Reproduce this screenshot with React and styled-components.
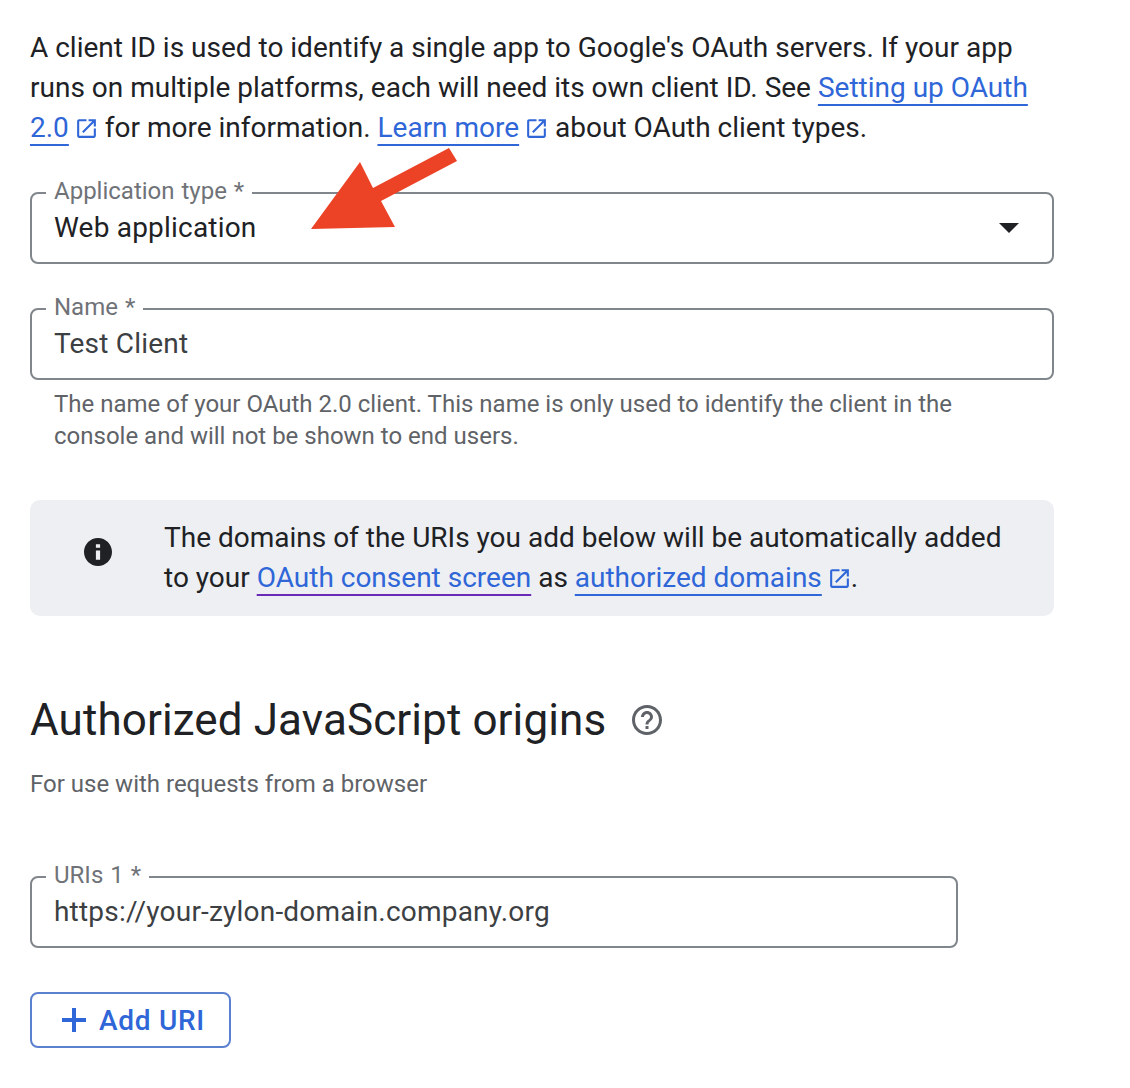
import React from 'react'
import styled, { createGlobalStyle } from 'styled-components'

const Global = createGlobalStyle`
    html, body {
        margin: 0;
        padding: 0;
        background: #ffffff;
    }
    body {
        font-family: Roboto, "Liberation Sans", sans-serif;
        color: #202124;
    }
`

const Page = styled.div`
    position: relative;
    width: 1130px;
    height: 1088px;
    overflow: hidden;
    box-sizing: border-box;
    padding: 28px 0 0 30px;
`

const Intro = styled.p`
    margin: 0 0 29px;
    width: 1024px;
    font-size: 28px;
    line-height: 40px;
    white-space: nowrap;
`

const TextLink = styled.a`
    color: #2f66d8;
    text-decoration: underline;
    text-decoration-color: ${p => p.$visited ? '#6a2ab8' : '#2f66d8'};
    text-decoration-thickness: 2px;
    text-underline-offset: 7px;
    text-decoration-skip-ink: none;
`

const LinkIcon = styled.svg`
    width: 25px;
    height: 25px;
    margin: 0 -1px 0 5px;
    vertical-align: -4px;
    fill: #2f66d8;
`

const Field = styled.fieldset`
    box-sizing: border-box;
    width: ${p => p.$width || 1024}px;
    height: 87px;
    margin: 0;
    padding: 0 22px;
    border: 2px solid #80868b;
    border-radius: 8px;
    display: flex;
    align-items: center;
    justify-content: space-between;
`

const Legend = styled.legend`
    margin-left: -8px;
    padding: 0 8px 4px;
    font-size: 24px;
    line-height: 28px;
    word-spacing: 1px;
    color: #6f7378;
`

const Value = styled.span`
    font-size: 28px;
    line-height: 40px;
    letter-spacing: 0.2px;
    color: ${p => p.$muted ? '#3c4043' : '#202124'};
    margin-top: -15px;
`

const Caret = styled.span`
    width: 0;
    height: 0;
    margin: -15px 11px 0 0;
    border-left: 10px solid transparent;
    border-right: 10px solid transparent;
    border-top: 10px solid #202124;
`

const Stack = styled.div`
    margin-bottom: ${p => p.$gap || 0}px;
`

const Helper = styled.p`
    margin: 8px 0 0;
    padding-left: 24px;
    font-size: 24px;
    line-height: 32px;
    color: #5f6368;
    white-space: nowrap;
`

const Notice = styled.div`
    box-sizing: border-box;
    width: 1024px;
    height: 116px;
    margin-bottom: 76px;
    padding: 18px 0 0 54px;
    display: flex;
    gap: 52px;
    background: #edeff3;
    border-radius: 10px;
`

const NoticeIcon = styled.svg`
    flex: none;
    width: 28px;
    height: 28px;
    margin: 20px 0 0;
    fill: #202124;
    transform: scale(1.2);
`

const NoticeText = styled.div`
    font-size: 28px;
    line-height: 40px;
    white-space: nowrap;
`

const TitleRow = styled.div`
    display: flex;
    align-items: center;
    gap: 23px;
    height: 56px;
    margin-bottom: 20px;
`

const Title = styled.h2`
    margin: 0;
    font-size: 44px;
    font-weight: 400;
    line-height: 56px;
    letter-spacing: 0.1px;
    color: #202124;
`

const HelpIcon = styled.svg`
    width: 36px;
    height: 36px;
    fill: #5f6368;
`

const Subtitle = styled.p`
    margin: 0 0 61px;
    font-size: 24px;
    line-height: 32px;
    color: #5f6368;
`

const AddButton = styled.button`
    box-sizing: border-box;
    width: 201px;
    height: 56px;
    margin-top: 44px;
    padding: 0 0 0 30px;
    display: flex;
    align-items: center;
    gap: 13px;
    background: #ffffff;
    border: 2px solid #5b80cf;
    border-radius: 8px;
    font-family: Roboto, "Liberation Sans", sans-serif;
    font-size: 28px;
    font-weight: 500;
    letter-spacing: 0.7px;
    color: #2f66d8;
`

const PlusIcon = styled.svg`
    width: 24px;
    height: 24px;
    fill: #2f66d8;
`

const Arrow = styled.svg`
    position: absolute;
    left: 300px;
    top: 140px;
    width: 170px;
    height: 100px;
    fill: #ec4225;
`

const OpenInNew = () => (
    <LinkIcon viewBox="0 0 24 24">
        <path d="M19 19H5V5h7V3H5c-1.11 0-2 .9-2 2v14c0 1.1.89 2 2 2h14c1.1 0 2-.9 2-2v-7h-2v7zM14 3v2h3.59l-9.83 9.83 1.41 1.41L19 6.41V10h2V3h-7z" />
    </LinkIcon>
)

export default function App () {
    return (
        <Page>
            <Global />
            <Intro>
                A client ID is used to identify a single app to Google's OAuth servers. If your app<br />
                runs on multiple platforms, each will need its own client ID. See <TextLink>Setting up OAuth</TextLink><br />
                <TextLink>2.0</TextLink><OpenInNew /> for more information. <TextLink>Learn more</TextLink><OpenInNew /> about OAuth client types.
            </Intro>

            <Stack $gap={29}>
                <Field>
                    <Legend>Application type *</Legend>
                    <Value>Web application</Value>
                    <Caret />
                </Field>
            </Stack>

            <Stack $gap={48}>
                <Field>
                    <Legend>Name *</Legend>
                    <Value $muted>Test Client</Value>
                </Field>
                <Helper>
                    The name of your OAuth 2.0 client. This name is only used to identify the client in the<br />
                    console and will not be shown to end users.
                </Helper>
            </Stack>

            <Notice>
                <NoticeIcon viewBox="0 0 24 24">
                    <path d="M12 2C6.48 2 2 6.48 2 12s4.48 10 10 10 10-4.48 10-10S17.52 2 12 2zm1.5 15.5h-3v-6.5h3zm0-8.5h-3V6.5h3z" />
                </NoticeIcon>
                <NoticeText>
                    The domains of the URIs you add below will be automatically added<br />
                    to your <TextLink $visited>OAuth consent screen</TextLink> as <TextLink>authorized domains</TextLink><OpenInNew />.
                </NoticeText>
            </Notice>

            <TitleRow>
                <Title>Authorized JavaScript origins</Title>
                <HelpIcon viewBox="0 0 24 24">
                    <path d="M11 18h2v-2h-2v2zm1-16C6.48 2 2 6.48 2 12s4.48 10 10 10 10-4.48 10-10S17.52 2 12 2zm0 18c-4.41 0-8-3.59-8-8s3.59-8 8-8 8 3.59 8 8-3.59 8-8 8zm0-14c-2.21 0-4 1.79-4 4h2c0-1.1.9-2 2-2s2 .9 2 2c0 2-3 1.75-3 5h2c0-2.25 3-2.5 3-5 0-2.21-1.79-4-4-4z" />
                </HelpIcon>
            </TitleRow>
            <Subtitle>For use with requests from a browser</Subtitle>

            <Field $width={928}>
                <Legend>URIs 1 *</Legend>
                <Value $muted>https://your-zylon-domain.company.org</Value>
            </Field>

            <AddButton>
                <PlusIcon viewBox="0 0 24 24">
                    <path d="M10 0h4v10h10v4H14v10h-4V14H0v-4h10z" />
                </PlusIcon>
                Add URI
            </AddButton>

            <Arrow viewBox="300 140 170 100">
                <polygon points="311,229 360,162 373,188 449,148 457,161 381,201 395,227" />
            </Arrow>
        </Page>
    )
}
